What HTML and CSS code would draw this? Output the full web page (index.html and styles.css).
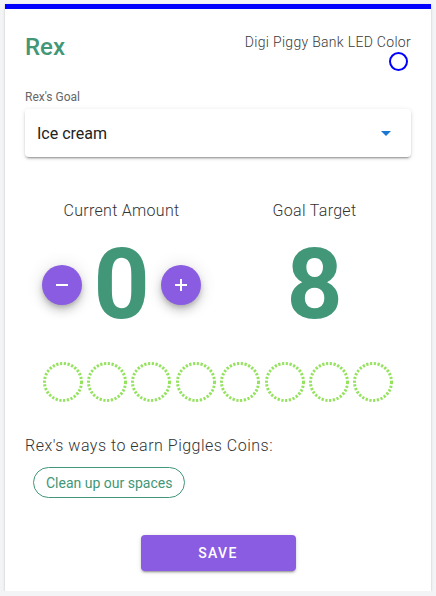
FILE: index.html
```html
<!DOCTYPE html>
<html>
<head>
<meta charset="utf-8">
<link rel="stylesheet" href="styles.css">
</head>
<body>
<div class="card">
  <div class="header">
    <div class="name">Rex</div>
    <div class="led">
      <div class="led-label">Digi Piggy Bank LED Color</div>
      <div class="led-dot"></div>
    </div>
  </div>

  <div class="goal-label">Rex's Goal</div>
  <div class="select">
    <span class="select-value">Ice cream</span>
    <span class="caret"></span>
  </div>

  <div class="amounts">
    <div class="col">
      <div class="col-label">Current Amount</div>
      <div class="counter">
        <button class="fab">
          <svg width="16" height="16" viewBox="0 0 16 16"><path d="M2 8h12" stroke="#fff" stroke-width="2"/></svg>
        </button>
        <div class="big">0</div>
        <button class="fab">
          <svg width="16" height="16" viewBox="0 0 16 16"><path d="M2 8h12M8 2v12" stroke="#fff" stroke-width="2"/></svg>
        </button>
      </div>
    </div>
    <div class="col">
      <div class="col-label">Goal Target</div>
      <div class="counter">
        <div class="big">8</div>
      </div>
    </div>
  </div>

  <div class="coins">
    <svg class="coin" viewBox="0 0 40 40"><circle cx="20" cy="20" r="18.5"/></svg>
    <svg class="coin" viewBox="0 0 40 40"><circle cx="20" cy="20" r="18.5"/></svg>
    <svg class="coin" viewBox="0 0 40 40"><circle cx="20" cy="20" r="18.5"/></svg>
    <svg class="coin" viewBox="0 0 40 40"><circle cx="20" cy="20" r="18.5"/></svg>
    <svg class="coin" viewBox="0 0 40 40"><circle cx="20" cy="20" r="18.5"/></svg>
    <svg class="coin" viewBox="0 0 40 40"><circle cx="20" cy="20" r="18.5"/></svg>
    <svg class="coin" viewBox="0 0 40 40"><circle cx="20" cy="20" r="18.5"/></svg>
    <svg class="coin" viewBox="0 0 40 40"><circle cx="20" cy="20" r="18.5"/></svg>
  </div>

  <div class="ways">Rex's ways to earn Piggles Coins:</div>
  <div class="chips">
    <span class="chip">Clean up our spaces</span>
  </div>

  <div class="actions">
    <button class="save">SAVE</button>
  </div>
</div>
</body>
</html>
```

FILE: styles.css
```css
html, body {
  margin: 0;
  padding: 0;
}
body {
  background: #f3f4f6;
  font-family: Roboto, "Liberation Sans", sans-serif;
  padding: 4px 5px 0 5px;
  width: 426px;
}
.card {
  background: #fff;
  border-top: 5px solid #0000ff;
  box-shadow: 0 2px 1px -1px rgba(0,0,0,0.2), 0 1px 1px 0 rgba(0,0,0,0.14), 0 1px 3px 0 rgba(0,0,0,0.12);
  padding: 22px 20px 19px 20px;
  box-sizing: border-box;
  height: 587px;
}
.header {
  display: flex;
  justify-content: space-between;
  align-items: flex-start;
}
.name {
  color: #419777;
  font-size: 24px;
  font-weight: 500;
  line-height: 32px;
}
.led {
  display: flex;
  flex-direction: column;
  align-items: flex-end;
}
.led-label {
  font-size: 14px;
  font-weight: 300;
  color: #3a3a3a;
  line-height: 20px;
  letter-spacing: 0.3px;
  margin-top: 1px;
}
.led-dot {
  width: 15px;
  height: 15px;
  border: 2px solid #0000ff;
  border-radius: 50%;
  margin-top: 0;
  margin-right: 3px;
}
.goal-label {
  margin-top: 18px;
  font-size: 12px;
  color: #666;
  line-height: 16px;
}
.select {
  margin-top: 4px;
  height: 48px;
  border-radius: 4px;
  box-shadow: 0 3px 1px -2px rgba(0,0,0,0.2), 0 2px 2px 0 rgba(0,0,0,0.14), 0 1px 5px 0 rgba(0,0,0,0.12);
  display: flex;
  align-items: center;
  justify-content: space-between;
  padding: 0 20px 0 12px;
}
.select-value {
  font-size: 16px;
  color: #222;
}
.caret {
  width: 0;
  height: 0;
  border-left: 5px solid transparent;
  border-right: 5px solid transparent;
  border-top: 5px solid #1976d2;
}
.amounts {
  display: grid;
  grid-template-columns: 1fr 1fr;
  margin-top: 44px;
}
.col {
  display: flex;
  flex-direction: column;
  align-items: center;
}
.col-label {
  font-size: 16px;
  font-weight: 300;
  color: #333;
  letter-spacing: 0.3px;
  line-height: 20px;
}
.counter {
  display: flex;
  align-items: center;
  gap: 11px;
  margin-top: 16px;
  height: 96px;
}
.big {
  font-size: 98px;
  font-weight: 700;
  color: #419777;
  line-height: 96px;
}
.fab {
  width: 40px;
  height: 40px;
  border-radius: 50%;
  border: none;
  background: #8a5ce2;
  display: flex;
  align-items: center;
  justify-content: center;
  padding: 0;
  box-shadow: 0 3px 5px -1px rgba(0,0,0,0.2), 0 6px 10px 0 rgba(0,0,0,0.14), 0 1px 18px 0 rgba(0,0,0,0.12);
}
.coins {
  display: flex;
  justify-content: center;
  gap: 4.4px;
  margin-top: 29px;
}
.coin {
  width: 40px;
  height: 40px;
}
.coin circle {
  fill: none;
  stroke: #94e25e;
  stroke-width: 3;
  stroke-dasharray: 2.2 1.6;
}
.ways {
  margin-top: 32px;
  font-size: 16px;
  font-weight: 300;
  color: #333;
  letter-spacing: 0.5px;
  line-height: 24px;
}
.chips {
  margin-top: 9px;
  padding-left: 8px;
  display: flex;
}
.chip {
  border: 1px solid #419777;
  border-radius: 16px;
  height: 31px;
  box-sizing: border-box;
  padding: 0 12px;
  display: inline-flex;
  align-items: center;
  font-size: 14px;
  color: #419777;
}
.actions {
  display: flex;
  justify-content: center;
  margin-top: 37px;
}
.save {
  width: 155px;
  height: 36px;
  border: none;
  border-radius: 4px;
  background: #8a5ce2;
  color: #fff;
  font-family: Roboto, "Liberation Sans", sans-serif;
  font-size: 14px;
  font-weight: 500;
  letter-spacing: 1.3px;
  box-shadow: 0 3px 1px -2px rgba(0,0,0,0.2), 0 2px 2px 0 rgba(0,0,0,0.14), 0 1px 5px 0 rgba(0,0,0,0.12);
}
```
